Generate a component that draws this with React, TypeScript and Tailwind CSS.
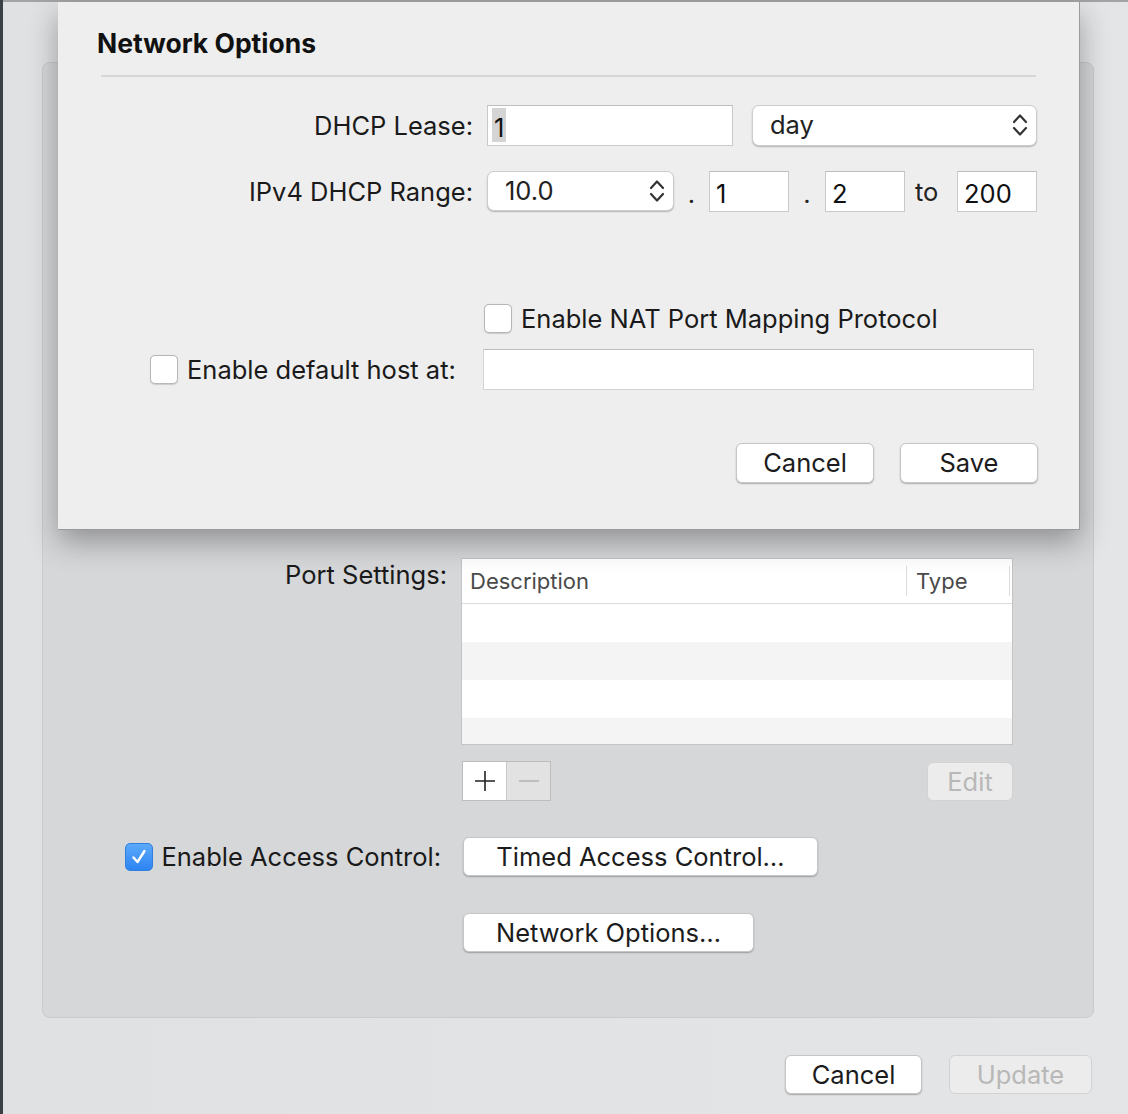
import React from "react";

const font = { fontFamily: "Inter, 'Liberation Sans', sans-serif" };

function MacButton({
  children,
  className = "",
  disabled = false,
}: {
  children: React.ReactNode;
  className?: string;
  disabled?: boolean;
}) {
  return (
    <div
      className={
        "flex items-center justify-center rounded-[6px] text-[25.5px] leading-none " +
        (disabled
          ? "bg-[#ececec] text-[#b8b8b8] border border-[#d2d2d2] "
          : "bg-white text-[#1c1c1c] border border-[#c6c6c6] shadow-[0_1px_1.5px_rgba(0,0,0,0.28)] ") +
        className
      }
    >
      {children}
    </div>
  );
}

function Chevrons() {
  return (
    <svg width="16" height="26" viewBox="0 0 16 26" fill="none">
      <path d="M2 10 L8 3.5 L14 10" stroke="#333" strokeWidth="2.2" strokeLinecap="round" strokeLinejoin="round" />
      <path d="M2 16 L8 22.5 L14 16" stroke="#333" strokeWidth="2.2" strokeLinecap="round" strokeLinejoin="round" />
    </svg>
  );
}

function Popup({ value, className = "" }: { value: string; className?: string }) {
  return (
    <div
      className={
        "flex items-center justify-between rounded-[7px] bg-white border border-[#cdcdcd] shadow-[0_1px_1.5px_rgba(0,0,0,0.25)] pl-[17px] pr-[8px] text-[25.5px] text-[#222] " +
        className
      }
    >
      <span className="leading-none">{value}</span>
      <Chevrons />
    </div>
  );
}

function Field({ children, className = "" }: { children?: React.ReactNode; className?: string }) {
  return (
    <div
      className={
        "flex items-center bg-white border border-[#c9c9c9] border-t-[#bdbdbd] text-[25.5px] text-[#111] px-[6px] pt-[5px] leading-none " +
        className
      }
    >
      {children}
    </div>
  );
}

function CheckBox({ checked = false }: { checked?: boolean }) {
  if (checked) {
    return (
      <div className="w-[28px] h-[28px] rounded-[5px] bg-gradient-to-b from-[#5aa9fa] to-[#2d84f2] border border-[#2f7fe0] flex items-center justify-center shrink-0">
        <svg width="18" height="18" viewBox="0 0 18 18" fill="none">
          <path d="M3.5 9.5 L7.5 14 L14.5 3" stroke="white" strokeWidth="2.4" strokeLinecap="round" strokeLinejoin="round" />
        </svg>
      </div>
    );
  }
  return (
    <div className="w-[28px] h-[29px] rounded-[5px] bg-white border border-[#b7b7b7] shadow-[0_0.5px_1px_rgba(0,0,0,0.15)] shrink-0" />
  );
}

function Sheet() {
  return (
    <div className="absolute left-[55px] top-[2px] w-[1022px] h-[528px] bg-[#eeeeee] border-r border-b border-[#9a9a9a] shadow-[0_12px_28px_rgba(0,0,0,0.32)] flex flex-col">
      <div className="pl-[39px] pt-[26px] text-[26.5px] font-bold leading-[30px] text-[#111]">
        Network Options
      </div>
      <div className="ml-[43px] mt-[17px] w-[935px] h-[2px] bg-[#d6d6d6]" />

      {/* DHCP Lease */}
      <div className="flex items-center mt-[27px] h-[42px]">
        <div className="w-[415px] text-right text-[25.5px] text-[#1a1a1a] pt-[2px]">DHCP Lease:</div>
        <Field className="ml-[14px] w-[246px] h-[41px] !px-[4px] !pt-[0px]">
          <span className="bg-[#d4d4d4] h-[34px] flex items-center px-[2px] pt-[5px] leading-none">1</span>
        </Field>
        <Popup value="day" className="ml-[19px] w-[285px] h-[41px]" />
      </div>

      {/* IPv4 Range */}
      <div className="flex items-center mt-[24px] h-[42px]">
        <div className="w-[415px] text-right text-[25.5px] text-[#1a1a1a] pt-[2px]">IPv4 DHCP Range:</div>
        <Popup value="10.0" className="ml-[14px] w-[187px] h-[40px]" />
        <div className="w-[35px] text-center text-[25.5px] text-[#222] mt-[6px]">.</div>
        <Field className="w-[80px] h-[41px]">1</Field>
        <div className="w-[36px] text-center text-[25.5px] text-[#222] mt-[6px]">.</div>
        <Field className="w-[80px] h-[41px]">2</Field>
        <div className="w-[52px] pl-[10px] text-[25.5px] text-[#222] pt-[2px]">to</div>
        <Field className="w-[80px] h-[41px]">200</Field>
      </div>

      {/* NAT */}
      <div className="flex items-center mt-[92px] ml-[426px] gap-[9px]">
        <CheckBox />
        <span className="text-[25.5px] text-[#1a1a1a] leading-none">Enable NAT Port Mapping Protocol</span>
      </div>

      {/* default host */}
      <div className="flex items-center mt-[16px]">
        <div className="w-[425px] pl-[92px] flex items-center gap-[9px]">
          <CheckBox />
          <span className="text-[25.5px] text-[#1a1a1a] leading-none">Enable default host at:</span>
        </div>
        <Field className="w-[551px] h-[41px] border-[#d3d3d3]" />
      </div>

      {/* buttons */}
      <div className="flex justify-end gap-[26px] pr-[41px] mt-[53px]">
        <MacButton className="w-[138px] h-[40px]">Cancel</MacButton>
        <MacButton className="w-[138px] h-[40px]">Save</MacButton>
      </div>
    </div>
  );
}

export default function App() {
  const rows = ["bg-white", "bg-[#f4f4f5]", "bg-white", "bg-[#f4f4f5]"];
  return (
    <div
      className="relative w-[1128px] h-[1114px] bg-gradient-to-r from-[#e0e1e3] to-[#e4e5e7] border-l-[3px] border-[#3b4047] overflow-hidden"
      style={font}
    >
      <div className="h-[2px] bg-[#a3a3a3]" />

      {/* group box */}
      <div className="ml-[39px] mt-[60px] w-[1052px] h-[956px] rounded-[8px] bg-[#d6d7d9] border border-[#c9cacc] pt-[495px]">
        {/* Port settings */}
        <div className="flex items-start">
          <div className="w-[404px] text-right text-[25.5px] text-[#1a1a1a] leading-[30px] mt-[2px]">Port Settings:</div>
          <div className="ml-[14px] w-[552px] h-[187px] border border-[#c4c4c4] bg-white flex flex-col overflow-hidden">
            <div className="h-[45px] shrink-0 flex items-center border-b border-[#dcdcdc] text-[22px] text-[#4a4a4a]">
              <div className="w-[445px] h-[30px] flex items-center pl-[8px] border-r border-[#dcdcdc]">Description</div>
              <div className="w-[103px] h-[30px] flex items-center pl-[9px] border-r border-[#dcdcdc]">Type</div>
            </div>
            {rows.map((r, i) => (
              <div key={i} className={"h-[38px] shrink-0 " + r} />
            ))}
          </div>
        </div>

        {/* +/- and Edit */}
        <div className="ml-[419px] w-[551px] mt-[16px] flex justify-between items-start">
          <div className="flex h-[40px] border border-[#bdbdbd]">
            <div className="w-[44px] h-full bg-white border-r border-[#c9c9c9] flex items-center justify-center">
              <svg width="22" height="22" viewBox="0 0 22 22">
                <path d="M11 1 V21 M1 11 H21" stroke="#222" strokeWidth="1.6" />
              </svg>
            </div>
            <div className="w-[43px] h-full bg-[#e2e2e3] flex items-center justify-center">
              <svg width="22" height="22" viewBox="0 0 22 22">
                <path d="M1 11 H21" stroke="#b4b4b4" strokeWidth="1.6" />
              </svg>
            </div>
          </div>
          <MacButton disabled className="w-[86px] h-[39px] mt-[1px]">Edit</MacButton>
        </div>

        {/* Access control */}
        <div className="flex items-center mt-[36px]">
          <div className="w-[398px] flex items-center justify-end gap-[8px]">
            <CheckBox checked />
            <span className="text-[25.5px] text-[#1a1a1a] leading-none">Enable Access Control:</span>
          </div>
          <MacButton className="ml-[22px] w-[355px] h-[39px]">Timed Access Control…</MacButton>
        </div>

        <div className="ml-[420px] mt-[37px]">
          <MacButton className="w-[291px] h-[39px]">Network Options…</MacButton>
        </div>
      </div>

      {/* bottom buttons */}
      <div className="flex justify-end gap-[27px] pr-[36px] mt-[37px]">
        <MacButton className="w-[137px] h-[39px]">Cancel</MacButton>
        <MacButton disabled className="w-[143px] h-[39px]">Update</MacButton>
      </div>

      <Sheet />
    </div>
  );
}
